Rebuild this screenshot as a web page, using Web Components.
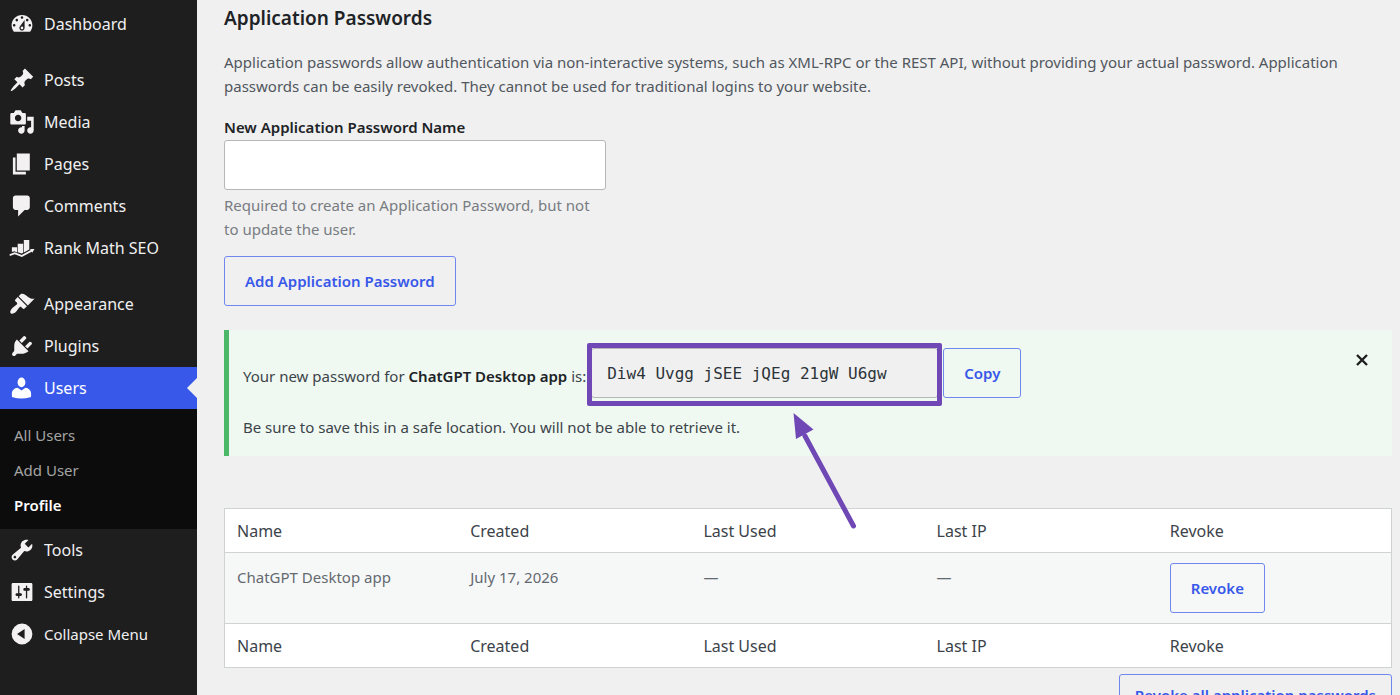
<!DOCTYPE html>
<html lang="en">
<head>
<meta charset="utf-8">
<title>Profile</title>
<style>
  :root {
    --accent: #3858e9;
    --page-bg: #f0f0f0;
    --menu-bg: #1e1e1e;
    --submenu-bg: #0c0c0c;
    --line: #d0d3d4;
    --mark: #7048b6;
  }
  body {
    margin: 0;
    overflow: hidden;
    background: var(--page-bg);
    color: #3c434a;
    font: 15px/24px "Noto Sans", "Open Sans", sans-serif;
  }
</style>
</head>
<body>
<admin-layout>
  <admin-menu slot="menu">
    <menu-item icon="dashboard">Dashboard</menu-item>
    <menu-separator></menu-separator>
    <menu-item icon="post">Posts</menu-item>
    <menu-item icon="media">Media</menu-item>
    <menu-item icon="page">Pages</menu-item>
    <menu-item icon="comments">Comments</menu-item>
    <menu-item icon="rankmath">Rank Math SEO</menu-item>
    <menu-separator></menu-separator>
    <menu-item icon="appearance">Appearance</menu-item>
    <menu-item icon="plugins">Plugins</menu-item>
    <menu-item icon="users" current>Users</menu-item>
    <sub-menu>
      <sub-item>All Users</sub-item>
      <sub-item>Add User</sub-item>
      <sub-item current>Profile</sub-item>
    </sub-menu>
    <menu-item icon="tools">Tools</menu-item>
    <menu-item icon="settings">Settings</menu-item>
    <menu-item icon="collapse" action>Collapse Menu</menu-item>
  </admin-menu>
  <application-passwords>
    <span slot="title">Application Passwords</span>
    <span slot="intro">Application passwords allow authentication via non-interactive systems, such as XML-RPC or the REST API, without providing your actual password. Application passwords can be easily revoked. They cannot be used for traditional logins to your website.</span>
    <new-password-form></new-password-form>
    <password-notice app="ChatGPT Desktop app" password="Diw4 Uvgg jSEE jQEg 21gW U6gw"></password-notice>
    <password-table></password-table>
  </application-passwords>
</admin-layout>

<script>
const ICONS = {
  dashboard: '<path d="M3.76 16h12.48c1.1-1.37 1.76-3.11 1.76-5 0-4.42-3.58-8-8-8s-8 3.58-8 8c0 1.89.66 3.63 1.76 5zM10 4c.55 0 1 .45 1 1s-.45 1-1 1-1-.45-1-1 .45-1 1-1zM6 6c.55 0 1 .45 1 1s-.45 1-1 1-1-.45-1-1 .45-1 1-1zm8 0c.55 0 1 .45 1 1s-.45 1-1 1-1-.45-1-1 .45-1 1-1zm-5.37 5.55L12 7v6c0 1.1-.9 2-2 2s-2-.9-2-2c0-.57.24-1.08.63-1.45zM4 10c.55 0 1 .45 1 1s-.45 1-1 1-1-.45-1-1 .45-1 1-1zm12 0c.55 0 1 .45 1 1s-.45 1-1 1-1-.45-1-1 .45-1 1-1zm-5 3c0-.55-.45-1-1-1s-1 .45-1 1 .45 1 1 1 1-.45 1-1z"/>',
  post: '<path d="M10.44 3.02l1.82-1.82 6.36 6.35-1.83 1.82c-1.05-.68-2.48-.57-3.41.36l-.75.75c-.92.93-1.04 2.35-.35 3.41l-1.83 1.82-2.41-2.41-2.8 2.79c-.42.42-3.38 2.71-3.8 2.29s1.86-3.39 2.28-3.81l2.79-2.79L4.1 9.36l1.83-1.82c1.05.69 2.48.57 3.4-.36l.75-.75c.93-.92 1.05-2.35.36-3.41z"/>',
  media: '<path d="M13 11V4c0-.55-.45-1-1-1h-1.67L9 1H5L3.67 3H2c-.55 0-1 .45-1 1v7c0 .55.45 1 1 1h10c.55 0 1-.45 1-1zM7 4.5c1.38 0 2.5 1.12 2.5 2.5S8.38 9.5 7 9.5 4.5 8.38 4.5 7 5.62 4.5 7 4.5zM14 6h5v10.5c0 1.38-1.12 2.5-2.5 2.5S14 17.88 14 16.5s1.12-2.5 2.5-2.5c.17 0 .34.02.5.05V9h-3V6zm-4 8.05V13h2v3.5c0 1.38-1.12 2.5-2.5 2.5S7 17.88 7 16.5 8.12 14 9.5 14c.17 0 .34.02.5.05z"/>',
  page: '<path d="M6 15V2h10v13H6zm-1 1h8v2H3V5h2v11z"/>',
  comments: '<path d="M5 2h9c1.1 0 2 .9 2 2v7c0 1.1-.9 2-2 2h-2l-5 5v-5H5c-1.1 0-2-.9-2-2V4c0-1.1.9-2 2-2z"/>',
  rankmath: '<path d="M2.2 9.4h4v4l-2.1-.9-1.9.6zM6.7 6.7h4.2v7l-1.2.6-3-1.1zM11.4 3.8h4.2v7.3l-4.2 2.3z"/><path d="M.4 14.9l4-1.6 5.4 2 6.9-3.7-.5-.9 3.4.1-1.7 2.9-.5-.9-7.5 4.1-5.5-2.1-3.7 1.3z"/>',
  appearance: '<path d="M14.48 11.06L7.41 3.99l1.5-1.5c.5-.56 2.3-.47 3.51.32 1.21.8 1.43 1.28 2.91 2.1 1.18.64 2.45 1.26 4.45.85zm-.71.71L6.7 4.7 4.93 6.47c-.39.39-.39 1.02 0 1.41l1.06 1.06c.39.39.39 1.03 0 1.42-.6.6-1.43 1.11-2.21 1.69-.35.26-.7.53-1.01.84C1.43 14.23.4 16.08 1.4 17.07c.99 1 2.84-.03 4.18-1.36.31-.31.58-.66.85-1.02.57-.78 1.08-1.61 1.69-2.21.39-.39 1.02-.39 1.41 0l1.06 1.06c.39.39 1.02.39 1.41 0z"/>',
  plugins: '<path d="M13.11 4.36L9.87 7.6 8 5.73l3.24-3.24c.35-.34 1.05-.2 1.56.32.52.51.66 1.21.31 1.55zm-8 1.77l.91-1.12 9.01 9.01-1.19.84c-.71.71-2.63 1.16-3.82 1.16H6.14L4.9 17.26c-.59.59-1.54.59-2.12 0-.59-.58-.59-1.53 0-2.12l1.24-1.24v-3.88c0-1.13.4-3.19 1.09-3.89zm7.26 3.97l3.24-3.24c.34-.35 1.04-.21 1.55.31.52.51.66 1.21.31 1.55l-3.24 3.25z"/>',
  users: '<ellipse cx="9.6" cy="5.7" rx="3" ry="3.7"/><path d="M6.6 9.9l3 2.1 3-2.1c2.6.2 4.4 2.2 4.4 4.6v1.8c0 .5-.2.8-.7.9-4.2 1.2-9.200 1.200-13.400 0-.5-.1-.7-.4-.7-.9v-1.800c0-2.400 1.800-4.400 4.400-4.600z"/>',
  tools: '<path d="M16.68 9.77c-1.34 1.34-3.3 1.67-4.95.99l-5.41 6.52c-.99.99-2.59.99-3.58 0s-.99-2.59 0-3.57l6.52-5.42c-.68-1.65-.35-3.61.99-4.95 1.28-1.28 3.12-1.62 4.72-1.06l-2.89 2.89 2.82 2.82 2.86-2.87c.53 1.58.18 3.39-1.08 4.65zM3.81 16.21c.4.39 1.04.39 1.43 0 .4-.4.4-1.04 0-1.43-.39-.4-1.03-.4-1.43 0-.39.39-.39 1.03 0 1.43z"/>',
  settings: '<path d="M18 16V4c0-.55-.45-1-1-1H3c-.55 0-1 .45-1 1v12c0 .55.45 1 1 1h14c.55 0 1-.45 1-1zM8 11h1c.55 0 1 .45 1 1s-.45 1-1 1H8v1.5c0 .28-.22.5-.5.5s-.5-.22-.5-.5V13H6c-.55 0-1-.45-1-1s.45-1 1-1h1V5.5c0-.28.22-.5.5-.5s.5.22.5.5V11zm5-2h-1c-.55 0-1-.45-1-1s.45-1 1-1h1V5.500c0-.28.22-.5.5-.5s.5.22.5.5V7h1c.55 0 1 .45 1 1s-.45 1-1 1h-1v5.500c0 .28-.22.5-.5.5s-.5-.22-.5-.5V9z"/>',
  collapse: '<path fill-rule="evenodd" d="M10 2a8 8 0 1 0 0 16 8 8 0 0 0 0-16zm2 4.2v7.6L6.2 10z"/>'
};

class AdminLayout extends HTMLElement {
  connectedCallback() {
    this.attachShadow({ mode: 'open' });
    this.shadowRoot.innerHTML = `
      <style>
        :host {
          display: grid;
          grid-template-columns: 197px 1fr;
          min-height: 100vh;
        }
        aside { background: var(--menu-bg); }
        main { padding: 6px 8px 24px 27px; min-width: 0; }
      </style>
      <aside><slot name="menu"></slot></aside>
      <main><slot></slot></main>
    `;
  }
}
customElements.define('admin-layout', AdminLayout);

class AdminMenu extends HTMLElement {
  connectedCallback() {
    this.attachShadow({ mode: 'open' });
    this.shadowRoot.innerHTML = `
      <style>
        :host { display: block; padding-top: 3px; }
        nav { display: flex; flex-direction: column; }
      </style>
      <nav aria-label="Main menu"><slot></slot></nav>
    `;
  }
}
customElements.define('admin-menu', AdminMenu);

class MenuSeparator extends HTMLElement {
  connectedCallback() {
    this.attachShadow({ mode: 'open' });
    this.shadowRoot.innerHTML = `<style>:host { display: block; height: 14px; }</style>`;
  }
}
customElements.define('menu-separator', MenuSeparator);

class MenuItem extends HTMLElement {
  connectedCallback() {
    const tag = this.hasAttribute('action') ? 'button type="button"' : 'a href="#"';
    const end = this.hasAttribute('action') ? 'button' : 'a';
    this.attachShadow({ mode: 'open' });
    this.shadowRoot.innerHTML = `
      <style>
        :host { display: block; position: relative; }
        a, button {
          display: flex;
          align-items: center;
          gap: 9px;
          box-sizing: border-box;
          width: 100%;
          height: 42px;
          margin: 0;
          padding: 0 9px;
          border: 0;
          background: none;
          color: #f0f0f1;
          font: inherit;
          text-decoration: none;
          cursor: pointer;
        }
        a { font-size: 16px; }
        svg { width: 26px; height: 26px; fill: #f3f1f1; flex: none; }
        :host([current]) { background: var(--accent); }
        :host([current]) a { color: #fff; }
        :host([current]) svg { fill: #fff; }
        /* notch that points at the current page */
        :host([current])::after {
          content: "";
          position: absolute;
          right: 0;
          top: 11px;
          border: 10px solid transparent;
          border-left: 0;
          border-right-color: var(--page-bg);
        }
      </style>
      <${tag}><svg viewBox="0 0 20 20" aria-hidden="true">${ICONS[this.getAttribute('icon')]}</svg><span><slot></slot></span></${end}>
    `;
  }
}
customElements.define('menu-item', MenuItem);

class SubMenu extends HTMLElement {
  connectedCallback() {
    this.attachShadow({ mode: 'open' });
    this.shadowRoot.innerHTML = `
      <style>
        :host { display: block; padding: 9px 0 6px; background: var(--submenu-bg); }
      </style>
      <slot></slot>
    `;
  }
}
customElements.define('sub-menu', SubMenu);

class SubItem extends HTMLElement {
  connectedCallback() {
    this.attachShadow({ mode: 'open' });
    this.shadowRoot.innerHTML = `
      <style>
        :host { display: block; }
        a {
          display: block;
          padding: 0 14px;
          color: #a4a4a4;
          line-height: 35px;
          text-decoration: none;
        }
        :host([current]) a { color: #fff; font-weight: 600; }
      </style>
      <a href="#"><slot></slot></a>
    `;
  }
}
customElements.define('sub-item', SubItem);

class WpButton extends HTMLElement {
  connectedCallback() {
    this.attachShadow({ mode: 'open' });
    this.shadowRoot.innerHTML = `
      <style>
        :host { display: inline-block; vertical-align: top; }
        button {
          display: block;
          box-sizing: border-box;
          height: 50px;
          padding: 0 20px;
          border: 1px solid #6f87ee;
          border-radius: 3px;
          background: transparent;
          color: var(--accent);
          font: inherit;
          font-weight: 600;
          white-space: nowrap;
          cursor: pointer;
        }
        :host([compact]) button { padding: 0 15px; height: 42px; }
      </style>
      <button type="button"><slot></slot></button>
    `;
  }
}
customElements.define('wp-button', WpButton);

class ApplicationPasswords extends HTMLElement {
  connectedCallback() {
    this.attachShadow({ mode: 'open' });
    this.shadowRoot.innerHTML = `
      <style>
        :host { display: block; }
        h2 { margin: 0 0 20px; color: #1d2327; font-size: 19px; line-height: 24px; font-weight: 600; }
        p { margin: 0 0 17px; color: #50575e; }
      </style>
      <h2><slot name="title"></slot></h2>
      <p><slot name="intro"></slot></p>
      <slot></slot>
    `;
  }
}
customElements.define('application-passwords', ApplicationPasswords);

class NewPasswordForm extends HTMLElement {
  connectedCallback() {
    this.attachShadow({ mode: 'open' });
    this.shadowRoot.innerHTML = `
      <style>
        :host { display: block; }
        .field { max-width: 382px; margin-bottom: 15px; }
        label { display: block; color: #1d2327; font-weight: 600; white-space: nowrap; }
        input {
          display: block;
          box-sizing: border-box;
          width: 100%;
          height: 50px;
          margin: 1px 0 3px;
          padding: 0 15px;
          border: 1px solid #b4b6b8;
          border-radius: 3px;
          background: #fff;
          font: inherit;
        }
        p { margin: 0; color: #787c82; }
      </style>
      <div class="field">
        <label for="name">New Application Password Name</label>
        <input id="name" type="text" aria-describedby="name-desc">
        <p id="name-desc">Required to create an Application Password, but not to update the user.</p>
      </div>
      <wp-button>Add Application Password</wp-button>
    `;
  }
}
customElements.define('new-password-form', NewPasswordForm);

class PasswordNotice extends HTMLElement {
  connectedCallback() {
    this.attachShadow({ mode: 'open' });
    this.shadowRoot.innerHTML = `
      <style>
        :host {
          display: flex;
          justify-content: space-between;
          align-items: flex-start;
          margin: 24px 0 52px;
          padding: 18px 20px 17px 14px;
          border-left: 5px solid #4ab866;
          background: #eff9f1;
        }
        .row { display: flex; gap: 5px; margin-bottom: 17px; }
        label { align-self: flex-end; padding-bottom: 10px; white-space: nowrap; }
        strong { color: #1d2327; font-weight: 600; }
        p { margin: 0; }
        .code { position: relative; width: 347px; }
        input {
          box-sizing: border-box;
          width: 100%;
          height: 50px;
          padding: 0 15px;
          border: 1px solid #b4b6b8;
          border-radius: 3px;
          background: #f0f0f0;
          color: #2c3338;
          font: 16px "DejaVu Sans Mono", monospace;
        }
        .frame {
          position: absolute;
          inset: -5px -4px -8px;
          border: 5px solid var(--mark);
          border-radius: 2px;
          pointer-events: none;
        }
        .arrow { position: absolute; left: 200px; top: 64px; width: 70px; height: 120px; pointer-events: none; }
        .dismiss {
          display: flex;
          margin: 5px 0 0;
          padding: 0;
          border: 0;
          background: none;
          cursor: pointer;
        }
      </style>
      <div>
        <div class="row">
          <label for="pass">Your new password for <strong>${this.getAttribute('app')}</strong> is:</label>
          <div class="code">
            <input id="pass" type="text" readonly value="${this.getAttribute('password')}">
            <div class="frame"></div>
            <svg class="arrow" viewBox="0 0 70 120" aria-hidden="true">
              <path d="M14 24L62.500 114" stroke="#7048b6" stroke-width="5" stroke-linecap="round"/>
              <path d="M2.500 1l20 16.500-17.500 9.500z" fill="#7048b6"/>
            </svg>
          </div>
          <wp-button>Copy</wp-button>
        </div>
        <p>Be sure to save this in a safe location. You will not be able to retrieve it.</p>
      </div>
      <button class="dismiss" type="button" aria-label="Dismiss this notice">
        <svg width="20" height="14" viewBox="0 0 20 14" aria-hidden="true"><path d="M5 2l10 10M15 2L5 12" stroke="#1e1e1e" stroke-width="2.4"/></svg>
      </button>
    `;
  }
}
customElements.define('password-notice', PasswordNotice);

class PasswordTable extends HTMLElement {
  connectedCallback() {
    const heads = ['Name', 'Created', 'Last Used', 'Last IP', 'Revoke'].map(h => `<th scope="col">${h}</th>`).join('');
    this.attachShadow({ mode: 'open' });
    this.shadowRoot.innerHTML = `
      <style>
        :host { display: block; }
        table {
          width: 100%;
          table-layout: fixed;
          border-spacing: 0;
          border: 1px solid var(--line);
          background: #fff;
        }
        th, td { padding: 10px 12px; text-align: left; vertical-align: top; font-weight: 400; }
        th { padding-bottom: 9px; color: #3c434a; font-size: 16px; }
        td { color: #646970; background: #f6f8f8; }
        thead th { border-bottom: 1px solid var(--line); }
        tfoot th { border-top: 1px solid var(--line); }
        td p { margin: 2px 0 0; }
        .actions { display: flex; justify-content: flex-end; padding-top: 6px; }
      </style>
      <table>
        <thead><tr>${heads}</tr></thead>
        <tbody>
          <tr>
            <td><p>ChatGPT Desktop app</p></td>
            <td><p>July 17, 2026</p></td>
            <td><p>—</p></td>
            <td><p>—</p></td>
            <td><wp-button>Revoke</wp-button></td>
          </tr>
        </tbody>
        <tfoot><tr>${heads}</tr></tfoot>
      </table>
      <div class="actions"><wp-button compact>Revoke all application passwords</wp-button></div>
    `;
  }
}
customElements.define('password-table', PasswordTable);
</script>
</body>
</html>
